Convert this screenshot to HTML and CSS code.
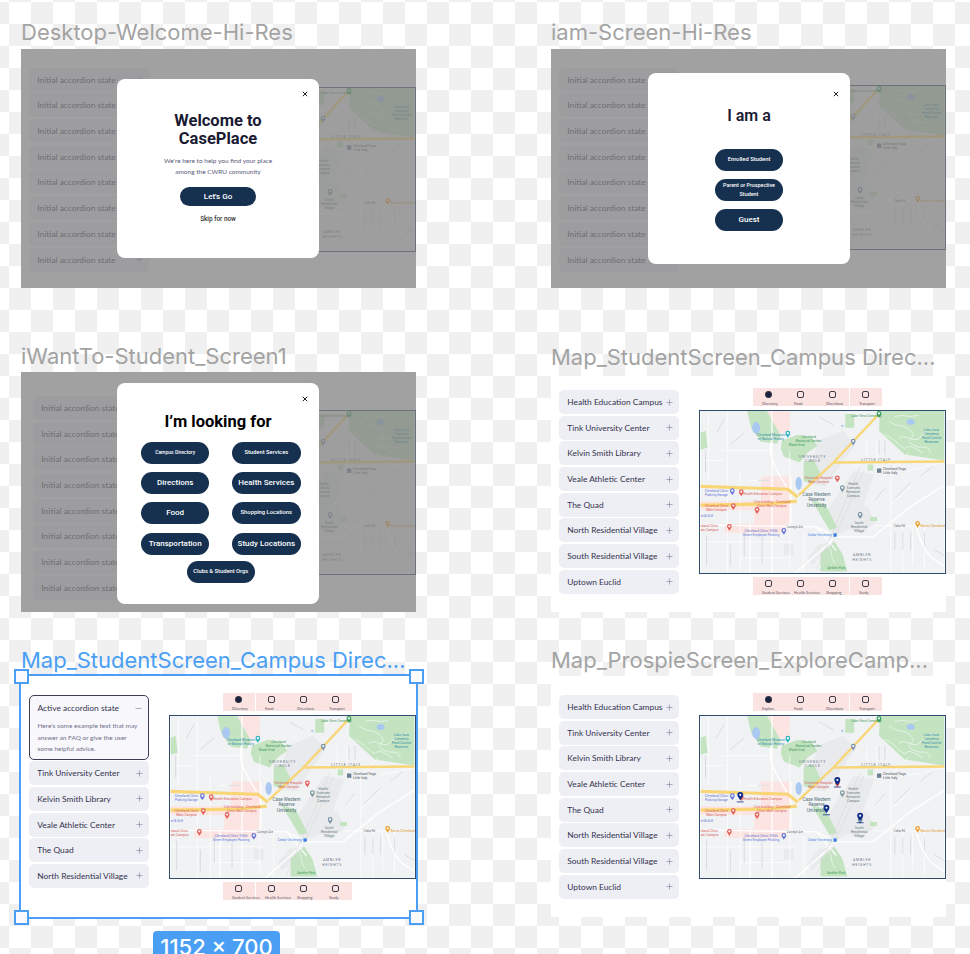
FILE: index.html
```html
<!DOCTYPE html>
<html lang="en">
    <head>
        <meta charset="UTF-8">
        <title>CasePlace screens</title>
        <link rel="stylesheet" href="styles.css">
    </head>

    <body>
        <!-- shared shapes -->
        <svg class="defs" width="0" height="0">
            <symbol id="plus" viewBox="0 0 7 7"><path d="M3.5 .5v6M.5 3.5h6"/></symbol>
            <symbol id="minus" viewBox="0 0 7 7"><path d="M.5 3.5h6"/></symbol>
            <symbol id="close" viewBox="0 0 6 6"><path d="M.8 .8l4.400 4.400M5.200 .8L.8 5.200"/></symbol>
            <g id="pin">
                <path d="M0 0c-.5-1.3-2.4-2.7-2.4-4.6a2.4 2.4 0 0 1 4.8 0C2.4-2.7.5-1.3 0 0z"/>
                <circle cy="-4.6" r="1.1" fill="#fff"/>
            </g>
            <g id="bigpin">
                <path d="M0 0c-.6-1.6-3-3.2-3-5.4a3 3 0 0 1 6 0C3-3.200.6-1.600 0 0z" fill="#0d2a86"/>
                <circle cy="-5.400" r="1.100" fill="#fff"/>
                <path d="M-3.500 1.700h7" stroke="#0d2a86" stroke-width=".8"/>
            </g>
        </svg>

        <main class="canvas">

            <section class="board board-welcome">
                <h2 class="board-name">Desktop-Welcome-Hi-Res</h2>
                <div class="screen screen-dim">
                    <div class="accordion">
                        <div class="acc-item">Initial accordion state<svg class="acc-icon"><use href="#plus"/></svg></div>
                        <div class="acc-item">Initial accordion state<svg class="acc-icon"><use href="#plus"/></svg></div>
                        <div class="acc-item">Initial accordion state<svg class="acc-icon"><use href="#plus"/></svg></div>
                        <div class="acc-item">Initial accordion state<svg class="acc-icon"><use href="#plus"/></svg></div>
                        <div class="acc-item">Initial accordion state<svg class="acc-icon"><use href="#plus"/></svg></div>
                        <div class="acc-item">Initial accordion state<svg class="acc-icon"><use href="#plus"/></svg></div>
                        <div class="acc-item">Initial accordion state<svg class="acc-icon"><use href="#plus"/></svg></div>
                        <div class="acc-item">Initial accordion state<svg class="acc-icon"><use href="#plus"/></svg></div>
                    </div>
                    <div class="map-col">
                        <div class="map"><svg class="map-svg" viewBox="0 0 246 164"><use href="#campusMap"/></svg></div>
                    </div>
                    <div class="scrim"></div>
                    <div class="modal">
                        <svg class="modal-close"><use href="#close"/></svg>
                        <h1 class="modal-title">Welcome to<br>CasePlace</h1>
                        <p class="modal-text">We're here to help you find your place<br>among the CWRU community</p>
                        <button class="pill pill-go">Let's Go</button>
                        <div class="skip">Skip for now</div>
                    </div>
                </div>
            </section>

            <section class="board board-iam">
                <h2 class="board-name">iam-Screen-Hi-Res</h2>
                <div class="screen screen-dim">
                    <div class="accordion">
                        <div class="acc-item">Initial accordion state<svg class="acc-icon"><use href="#plus"/></svg></div>
                        <div class="acc-item">Initial accordion state<svg class="acc-icon"><use href="#plus"/></svg></div>
                        <div class="acc-item">Initial accordion state<svg class="acc-icon"><use href="#plus"/></svg></div>
                        <div class="acc-item">Initial accordion state<svg class="acc-icon"><use href="#plus"/></svg></div>
                        <div class="acc-item">Initial accordion state<svg class="acc-icon"><use href="#plus"/></svg></div>
                        <div class="acc-item">Initial accordion state<svg class="acc-icon"><use href="#plus"/></svg></div>
                        <div class="acc-item">Initial accordion state<svg class="acc-icon"><use href="#plus"/></svg></div>
                        <div class="acc-item">Initial accordion state<svg class="acc-icon"><use href="#plus"/></svg></div>
                    </div>
                    <div class="map-col">
                        <div class="map"><svg class="map-svg" viewBox="0 0 246 164"><use href="#campusMap"/></svg></div>
                    </div>
                    <div class="scrim"></div>
                    <div class="modal">
                        <svg class="modal-close"><use href="#close"/></svg>
                        <h1 class="modal-title">I am a</h1>
                        <div class="pill-stack">
                            <button class="pill pill-sm">Enrolled Student</button>
                            <button class="pill pill-xs">Parent or Prospective Student</button>
                            <button class="pill">Guest</button>
                        </div>
                    </div>
                </div>
            </section>

            <section class="board board-want">
                <h2 class="board-name">iWantTo-Student_Screen1</h2>
                <div class="screen screen-dim">
                    <div class="accordion">
                        <div class="acc-item">Initial accordion state<svg class="acc-icon"><use href="#plus"/></svg></div>
                        <div class="acc-item">Initial accordion state<svg class="acc-icon"><use href="#plus"/></svg></div>
                        <div class="acc-item">Initial accordion state<svg class="acc-icon"><use href="#plus"/></svg></div>
                        <div class="acc-item">Initial accordion state<svg class="acc-icon"><use href="#plus"/></svg></div>
                        <div class="acc-item">Initial accordion state<svg class="acc-icon"><use href="#plus"/></svg></div>
                        <div class="acc-item">Initial accordion state<svg class="acc-icon"><use href="#plus"/></svg></div>
                        <div class="acc-item">Initial accordion state<svg class="acc-icon"><use href="#plus"/></svg></div>
                        <div class="acc-item">Initial accordion state<svg class="acc-icon"><use href="#plus"/></svg></div>
                    </div>
                    <div class="map-col">
                        <div class="map"><svg class="map-svg" viewBox="0 0 246 164"><use href="#campusMap"/></svg></div>
                    </div>
                    <div class="scrim"></div>
                    <div class="modal">
                        <svg class="modal-close"><use href="#close"/></svg>
                        <h1 class="modal-title">I’m looking for</h1>
                        <div class="pill-grid">
                            <button class="pill pill-xxs">Campus Directory</button>
                            <button class="pill pill-sm">Student Services</button>
                            <button class="pill">Directions</button>
                            <button class="pill">Health Services</button>
                            <button class="pill">Food</button>
                            <button class="pill pill-sm">Shopping Locations</button>
                            <button class="pill">Transportation</button>
                            <button class="pill">Study Locations</button>
                            <button class="pill pill-sm pill-wide">Clubs &amp; Student Orgs</button>
                        </div>
                    </div>
                </div>
            </section>

            <section class="board board-directory">
                <h2 class="board-name">Map_StudentScreen_Campus Direc...</h2>
                <div class="screen">
                    <div class="accordion">
                        <div class="acc-item">Health Education Campus<svg class="acc-icon"><use href="#plus"/></svg></div>
                        <div class="acc-item">Tink University Center<svg class="acc-icon"><use href="#plus"/></svg></div>
                        <div class="acc-item">Kelvin Smith Library<svg class="acc-icon"><use href="#plus"/></svg></div>
                        <div class="acc-item">Veale Athletic Center<svg class="acc-icon"><use href="#plus"/></svg></div>
                        <div class="acc-item">The Quad<svg class="acc-icon"><use href="#plus"/></svg></div>
                        <div class="acc-item">North Residential Village<svg class="acc-icon"><use href="#plus"/></svg></div>
                        <div class="acc-item">South Residential Village<svg class="acc-icon"><use href="#plus"/></svg></div>
                        <div class="acc-item">Uptown Euclid<svg class="acc-icon"><use href="#plus"/></svg></div>
                    </div>
                    <div class="map-col">
                        <div class="tabs tabs-split3">
                            <div class="tab tab-on"><i class="tab-icon"></i>Directory</div>
                            <div class="tab"><i class="tab-icon"></i>Food</div>
                            <div class="tab"><i class="tab-icon"></i>Directions</div>
                            <div class="tab"><i class="tab-icon"></i>Transport</div>
                        </div>
                        <div class="map">
                            <!-- the other boards reuse this map with <use> -->
                            <svg class="map-svg" viewBox="0 0 246 164">
                                <g id="campusMap">
                                    <rect width="246" height="164" fill="#f1f2f4"/>

                                    <!-- pink hospital blocks -->
                                    <path class="m-pink" d="M68 0h22v22H76zM61 66h30v48H54v-14H0V91h61z"/>
                                    <path class="m-pink" d="M24 114h62v9H24z"/>

                                    <!-- grey campus blocks -->
                                    <path class="m-block" d="M118 30l26-10 12 14-30 42-18-2zM123 108l32-48 20 4-4 12-14 40-22 10z"/>
                                    <path class="m-block" d="M152 100l16-4 8 16-14 12-14-6zM108 148l12-14 16-2-24 24z"/>
                                    <rect class="m-block" x="84" y="134" width="10" height="11"/>

                                    <!-- parks -->
                                    <path class="m-park" d="M47 0h20l14 25-4 8-16-2-10-14z"/>
                                    <path class="m-park" d="M82 30l16-6 14 3 6 8-10 7-8 10-16-6-3-8z"/>
                                    <path class="m-park" d="M181 0h65v50l-40-6-26-24z"/>
                                    <path class="m-park" d="M146 3h9v14h-9zM0 22l5-2 2 17-7 2zM104 52l10-3 7 14-8 10-9-2z"/>
                                    <path class="m-park" d="M112 90l14 4 12 24-8 2zM121 144l14-12 8 12 5 18h-27z"/>
                                    <rect class="m-park" x="171" y="107" width="7" height="4"/>
                                    <rect class="m-park" x="168" y="54" width="6" height="6"/>
                                    <path class="m-trail" d="M190 10c10 8 14 2 22 10s-8 8 2 14 14-2 18 8M200 28c6-6 14 4 20 0s8-12 18-10M186 24c8 2 12 10 20 14M196 6c8-4 14 2 24-2M206 38c6-6 12 2 18 4"/>
                                    <path class="m-trail" d="M128 136c6 4 2 12 8 18"/>

                                    <!-- water -->
                                    <ellipse class="m-water" cx="56" cy="17" rx="4" ry="6"/>
                                    <ellipse class="m-water" cx="99" cy="73" rx="3.200" ry="6.500"/>
                                    <ellipse class="m-water" cx="212" cy="11" rx="4" ry="3"/>
                                    <circle class="m-water" cx="143" cy="15" r="1.200"/>

                                    <!-- side streets -->
                                    <path class="m-street" d="M27 0v164M40 60v104M8 0v70M20 40H72M4 50h20M48 70h24M90 40v120M104 120v44M0 132h96M40 148h50M168 30v30M178 30v28M192 60v104M204 116v48M214 116v40M226 116v44M180 70l30-28M186 100l26-24M210 60l36-8M175 116h50"/>
                                    <path class="m-minor" d="M16 22l8-14M30 34l14-12M5 40v22M120 6l14 8M58 70h12M44 122v26M62 128v26M6 126v30M30 135v22M180 30v14M186 30v14M196 122v18M204 122v18M212 122v18M226 122v18M196 88l16-16M176 90l10-12M222 66l12-10M236 140l10 6"/>
                                    <path class="m-road" d="M72 0v164M73 27c-8 14 2 30 14 50M0 115l117 2 20 10h37l37-30 35-22M217 114c4 16 8 26 16 34l13 9M137 127l-42 37M117 117l20 24M91 66v48M50 114v50"/>
                                    <path class="m-rail" d="M161 57l-44 103M165 60l-44 100"/>

                                    <!-- highways -->
                                    <path class="m-hwy" d="M179 4L134 52 99 85"/>
                                    <path class="m-hwy" d="M135 52l111-1"/>
                                    <path class="m-hwy-wide" d="M0 76l88 3 10 8M0 95l68-1 29-3"/>

                                    <!-- pins -->
                                    <use href="#pin" x="180" y="7" fill="#36a15a"/>
                                    <use href="#pin" x="88" y="27" fill="#2eb3bf"/>
                                    <use href="#pin" x="154" y="35" fill="#7c92a8"/>
                                    <use href="#pin" x="138" y="72" fill="#e0605a"/>
                                    <use href="#pin" x="143" y="82" fill="#7c98a0"/>
                                    <use href="#pin" x="32" y="85" fill="#6b78d8"/>
                                    <use href="#pin" x="41" y="86" fill="#e0605a"/>
                                    <use href="#pin" x="33" y="100" fill="#e0605a"/>
                                    <use href="#pin" x="57" y="104" fill="#e0605a"/>
                                    <use href="#pin" x="29" y="121" fill="#e0605a"/>
                                    <use href="#pin" x="84" y="125" fill="#6b78d8"/>
                                    <use href="#pin" x="161" y="109" fill="#7c92a8"/>
                                    <use href="#pin" x="219" y="118" fill="#eb9d2c"/>
                                    <rect x="178" y="58" width="4.400" height="4.400" fill="#6e8296"/>
                                    <rect x="134" y="123.500" width="3.400" height="3.400" fill="#3f7fe0"/>

                                    <!-- labels -->
                                    <text class="m-txt m-green" x="152" y="6">Lake View Cemetery</text>
                                    <text class="m-txt m-teal m-mid" x="233"><tspan x="233" y="20">Lake View</tspan><tspan x="233" y="24">Cemetery</tspan><tspan x="233" y="28">Pond Control</tspan><tspan x="233" y="32">Reservoir</tspan></text>
                                    <text class="m-txt m-teal m-mid" x="71"><tspan x="71" y="25">Cleveland Museum</tspan><tspan x="71" y="29">of Natural History</tspan></text>
                                    <text class="m-txt m-green m-mid" x="109"><tspan x="109" y="27">Cleveland</tspan><tspan x="109" y="31">Botanical Garden</tspan><tspan x="97" y="35.500">Wade Oval</tspan></text>
                                    <text class="m-area m-mid" x="113"><tspan x="113" y="47">UNIVERSITY</tspan><tspan x="113" y="51.500">CIRCLE</tspan></text>
                                    <text class="m-area m-mid" x="177" y="50.500">LITTLE ITALY</text>
                                    <text class="m-txt m-dark" x="184"><tspan x="184" y="60">Cleveland Yoga</tspan><tspan x="184" y="64">Little Italy</tspan></text>
                                    <text class="m-txt m-red m-mid" x="119"><tspan x="119" y="69">University Hospital</tspan><tspan x="119" y="73">Main Campus</tspan></text>
                                    <text class="m-txt m-slate m-mid" x="154"><tspan x="154" y="75">Health</tspan><tspan x="154" y="79">Sciences</tspan><tspan x="154" y="83">Research</tspan><tspan x="154" y="87">Campus</tspan></text>
                                    <text class="m-case m-mid" x="117"><tspan x="117" y="85.500">Case Western</tspan><tspan x="117" y="91">Reserve</tspan><tspan x="117" y="96.500">University</tspan></text>
                                    <text class="m-txt m-blue m-mid" x="16"><tspan x="16" y="82">Cleveland Clinic</tspan><tspan x="16" y="86">Parking Garage</tspan></text>
                                    <text class="m-txt m-red" x="43" y="85">Health Education Campus</text>
                                    <text class="m-txt m-red m-mid" x="16"><tspan x="16" y="97">Cleveland Clinic</tspan><tspan x="16" y="101">Main Campus</tspan></text>
                                    <text class="m-txt m-red m-mid" x="72"><tspan x="72" y="93">Crile building - Cleveland</tspan><tspan x="72" y="97">Clinic Main Campus</tspan></text>
                                    <text class="m-txt m-blue" x="0" y="107">et &amp; Grill</text>
                                    <text class="m-txt m-red" x="0"><tspan x="0" y="117">eland Clinic</tspan><tspan x="0" y="121">ain Campus</tspan></text>
                                    <text class="m-txt m-blue m-mid" x="61"><tspan x="61" y="122">Cleveland Clinic 100th</tspan><tspan x="61" y="126">Street Employee Parking</tspan></text>
                                    <text class="m-txt m-road-name" x="87" y="118">Carnegie Ave</text>
                                    <text class="m-txt m-road-name" x="195" y="117">Cedar Rd</text>
                                    <text class="m-txt m-cedar" x="108" y="126.500">Cedar-University</text>
                                    <text class="m-txt m-slate m-mid" x="160"><tspan x="160" y="114">South</tspan><tspan x="160" y="118">Residential</tspan><tspan x="160" y="122">Village</tspan></text>
                                    <text class="m-txt m-orange" x="222" y="117">Barrio Cleveland</text>
                                    <text class="m-area m-mid" x="163"><tspan x="163" y="146">AMBLER</tspan><tspan x="163" y="151">HEIGHTS</tspan></text>
                                    <text class="m-txt m-green m-mid" x="137" y="159.500">Ambler Park</text>
                                </g>
                            </svg>
                        </div>
                        <div class="tabs tabs-split3">
                            <div class="tab"><i class="tab-icon"></i>Student Services</div>
                            <div class="tab"><i class="tab-icon"></i>Health Services</div>
                            <div class="tab"><i class="tab-icon"></i>Shopping</div>
                            <div class="tab"><i class="tab-icon"></i>Study</div>
                        </div>
                    </div>
                </div>
            </section>

            <section class="board board-active">
                <h2 class="board-name">Map_StudentScreen_Campus Direc...</h2>
                <div class="screen">
                    <div class="accordion">
                        <div class="acc-item acc-open">
                            <div class="acc-head">Active accordion state<svg class="acc-icon"><use href="#minus"/></svg></div>
                            <p class="acc-body">Here's some example text that may<br>answer an FAQ or give the user<br>some helpful advice.</p>
                        </div>
                        <div class="acc-item">Tink University Center<svg class="acc-icon"><use href="#plus"/></svg></div>
                        <div class="acc-item">Kelvin Smith Library<svg class="acc-icon"><use href="#plus"/></svg></div>
                        <div class="acc-item">Veale Athletic Center<svg class="acc-icon"><use href="#plus"/></svg></div>
                        <div class="acc-item">The Quad<svg class="acc-icon"><use href="#plus"/></svg></div>
                        <div class="acc-item">North Residential Village<svg class="acc-icon"><use href="#plus"/></svg></div>
                    </div>
                    <div class="map-col">
                        <div class="tabs tabs-split1">
                            <div class="tab tab-on"><i class="tab-icon"></i>Directory</div>
                            <div class="tab"><i class="tab-icon"></i>Food</div>
                            <div class="tab"><i class="tab-icon"></i>Directions</div>
                            <div class="tab"><i class="tab-icon"></i>Transport</div>
                        </div>
                        <div class="map"><svg class="map-svg" viewBox="0 0 246 164"><use href="#campusMap"/></svg></div>
                        <div class="tabs tabs-split1">
                            <div class="tab"><i class="tab-icon"></i>Student Services</div>
                            <div class="tab"><i class="tab-icon"></i>Health Services</div>
                            <div class="tab"><i class="tab-icon"></i>Shopping</div>
                            <div class="tab"><i class="tab-icon"></i>Study</div>
                        </div>
                    </div>
                </div>
                <i class="handle handle-tl"></i>
                <i class="handle handle-tr"></i>
                <i class="handle handle-bl"></i>
                <i class="handle handle-br"></i>
                <div class="size-badge">1152 × 700</div>
            </section>

            <section class="board board-explore">
                <h2 class="board-name">Map_ProspieScreen_ExploreCamp...</h2>
                <div class="screen">
                    <div class="accordion">
                        <div class="acc-item">Health Education Campus<svg class="acc-icon"><use href="#plus"/></svg></div>
                        <div class="acc-item">Tink University Center<svg class="acc-icon"><use href="#plus"/></svg></div>
                        <div class="acc-item">Kelvin Smith Library<svg class="acc-icon"><use href="#plus"/></svg></div>
                        <div class="acc-item">Veale Athletic Center<svg class="acc-icon"><use href="#plus"/></svg></div>
                        <div class="acc-item">The Quad<svg class="acc-icon"><use href="#plus"/></svg></div>
                        <div class="acc-item">North Residential Village<svg class="acc-icon"><use href="#plus"/></svg></div>
                        <div class="acc-item">South Residential Village<svg class="acc-icon"><use href="#plus"/></svg></div>
                        <div class="acc-item">Uptown Euclid<svg class="acc-icon"><use href="#plus"/></svg></div>
                    </div>
                    <div class="map-col">
                        <div class="tabs tabs-split3">
                            <div class="tab tab-on"><i class="tab-icon"></i>Explore</div>
                            <div class="tab"><i class="tab-icon"></i>Food</div>
                            <div class="tab"><i class="tab-icon"></i>Directions</div>
                            <div class="tab"><i class="tab-icon"></i>Transport</div>
                        </div>
                        <div class="map">
                            <svg class="map-svg" viewBox="0 0 246 164">
                                <use href="#campusMap"/>
                                <use href="#bigpin" x="138" y="70"/>
                                <use href="#bigpin" x="40" y="85"/>
                                <use href="#bigpin" x="127" y="98"/>
                                <use href="#bigpin" x="161" y="106"/>
                            </svg>
                        </div>
                    </div>
                </div>
            </section>

        </main>
    </body>
</html>
```

FILE: styles.css
```css
html, body {
    margin: 0;
    height: 100%;
    overflow: hidden;
}

body {
    font-family: "Lato", "Liberation Sans", sans-serif;
    color: #34344e;
}

.defs {
    position: absolute;
}

.canvas {
    position: relative;
    width: 970px;
    height: 954px;
    overflow: hidden;
    background: conic-gradient(#f0f0f0 25%, #fff 0 50%, #f0f0f0 0 75%, #fff 0) 9px 2px / 44px 44px;
}

/* artboards sit freely on the canvas */
.board {
    position: absolute;
    width: 395px;
}

.board-welcome { left: 21px; top: 19px; }
.board-iam { left: 551px; top: 19px; }
.board-want { left: 21px; top: 343px; }
.board-directory { left: 551px; top: 344px; }
.board-active { left: 21px; top: 647px; }
.board-explore { left: 551px; top: 647px; }

.board-name {
    margin: 0 0 3px;
    height: 26px;
    font: 400 22px/26px "Inter", sans-serif;
    color: #a3a3a3;
    white-space: nowrap;
}

.board-welcome .board-name, .board-iam .board-name { margin-bottom: 4px; }
.board-directory .board-name { margin-bottom: 6px; }

.board-active .board-name {
    color: #4a9ff5;
}

.screen {
    position: relative;
    display: flex;
    gap: 20px;
    padding-left: 8px;
    height: 240px;
    box-sizing: border-box;
    background: #fff;
    overflow: hidden;
}

.board-welcome .screen, .board-iam .screen { height: 239px; }
.board-directory .screen { height: 236px; }
.board-active .screen, .board-explore .screen { height: 241px; }

.board-want .screen { padding-left: 12px; gap: 16px; }

.board-welcome .accordion, .board-iam .accordion { margin-top: 18.7px; }
.board-want .accordion { margin-top: 24px; }
.board-directory .accordion { margin-top: 14px; }
.board-active .accordion, .board-explore .accordion { margin-top: 19px; }

.board-welcome .map-col { margin-top: 38px; }
.board-iam .map-col { margin-top: 36px; }
.board-want .map-col { margin-top: 38px; }
.board-directory .map-col { margin-top: 12px; }
.board-active .map-col, .board-explore .map-col { margin-top: 17px; }

/* accordion */
.accordion {
    display: flex;
    flex-direction: column;
    gap: 1.7px;
    width: 120px;
    flex: none;
}

.acc-item {
    display: flex;
    align-items: center;
    justify-content: space-between;
    height: 24px;
    flex: none;
    padding: 0 6.500px 0 8.300px;
    box-sizing: border-box;
    border-radius: 5px;
    background: #eeeef5;
    font-size: 8.400px;
    white-space: nowrap;
}

.acc-icon {
    width: 7px;
    height: 7px;
    flex: none;
    fill: none;
    stroke: #8c8ca3;
    stroke-width: .7;
}

.acc-open {
    display: block;
    height: 64.500px;
    padding: 0 6.500px 0 7.500px;
    background: #f8f8fc;
    border: .8px solid #3c3c55;
}

.acc-head {
    display: flex;
    align-items: center;
    justify-content: space-between;
    height: 24px;
}

.acc-body {
    margin: 0;
    font-size: 6.500px;
    line-height: 11.500px;
    color: #70708a;
    white-space: nowrap;
}

/* map column */
.map-col {
    display: flex;
    flex-direction: column;
    width: 247px;
    flex: none;
}

.map {
    box-sizing: border-box;
    width: 247px;
    height: 164.500px;
    margin: 3.500px 0 3px;
    border: 1.500px solid #2f4b6e;
    flex: none;
}

.board-welcome .map, .board-iam .map, .board-want .map {
    margin-top: 0;
}

.map-svg {
    display: block;
    width: 100%;
    height: 100%;
}

.tabs {
    display: flex;
    width: 129px;
    height: 18px;
    margin-left: 54px;
    flex: none;
    background: #fae3e1;
}

.tab {
    display: flex;
    flex-direction: column;
    align-items: flex-start;
    flex: 1 0 0;
    min-width: 0;
    padding: 3px 0 0 9px;
    box-sizing: border-box;
    font-size: 3.800px;
    line-height: 5px;
    color: #5a5a68;
    white-space: nowrap;
}

.tabs-split1 .tab:nth-child(1), .tabs-split3 .tab:nth-child(3) {
    border-right: 1px solid #fff;
}

.tab-icon {
    display: block;
    flex: none;
    width: 7px;
    height: 7px;
    margin: 0 0 2.500px 2.500px;
    box-sizing: border-box;
    border: .8px solid #3a3a4a;
    border-radius: 2px;
}

.tab-on .tab-icon {
    background: #1a2240;
    border-radius: 3px;
}

/* dimmed screens with a dialog on top */
.scrim {
    position: absolute;
    inset: 0;
    background: rgba(128, 128, 128, .74);
}

.modal {
    position: absolute;
    width: 202px;
    display: flex;
    flex-direction: column;
    align-items: center;
    box-sizing: border-box;
    background: #fff;
    border-radius: 8px;
    color: #1a1a33;
}

.board-welcome .modal { left: 96px; top: 30px; height: 179px; padding-top: 33px; }
.board-iam .modal { left: 97px; top: 24px; height: 191px; padding-top: 33px; }
.board-want .modal { left: 96px; top: 11px; height: 221px; padding-top: 28.700px; }

.modal-close {
    position: absolute;
    right: 11.500px;
    top: 12px;
    width: 6px;
    height: 6px;
    fill: none;
    stroke: #222;
    stroke-width: 1;
}

.board-iam .modal-close { top: 18px; }
.board-want .modal-close { top: 13px; }

.modal-title {
    margin: 0;
    font-family: "Roboto", sans-serif;
    font-size: 16.500px;
    line-height: 17.500px;
    font-weight: 700;
    text-align: center;
}

.board-iam .modal-title, .board-want .modal-title {
    line-height: 20px;
}

.board-iam .modal-title { font-size: 16px; font-weight: 600; }
.board-want .modal-title { color: #000; font-size: 16.500px; }

.modal-text {
    margin: 7.700px 0 0;
    font-size: 6.500px;
    line-height: 11.500px;
    color: #5a5a78;
    text-align: center;
}

.pill {
    display: block;
    width: 68.500px;
    height: 22px;
    padding: 0 4px;
    border: 0;
    border-radius: 11px;
    background: #16304f;
    color: #fff;
    font: 500 8px/1 "Roboto", sans-serif;
}

.pill-sm { font-size: 5.800px; }
.pill-xs { font-size: 5.400px; line-height: 9.500px; padding: 0 2px; }
.pill-xxs { font-size: 5px; }

.pill-go {
    width: 75.500px;
    height: 19.300px;
    margin-top: 9.500px;
    font-size: 8px;
}

.skip {
    margin-top: 8.700px;
    font-family: "Roboto", sans-serif;
    font-size: 6.400px;
    line-height: 8px;
    font-weight: 500;
    color: #333;
}

.pill-stack {
    display: flex;
    flex-direction: column;
    gap: 8px;
    margin-top: 23px;
}

.pill-grid {
    display: grid;
    grid-template-columns: 68.500px 68.500px;
    column-gap: 22.700px;
    row-gap: 8.200px;
    margin: 10.300px 0 0 5.500px;
}

.pill-wide {
    grid-column: 1 / 3;
    justify-self: center;
    margin-top: -1.500px;
}

/* selection chrome around the active board */
.board-active .screen {
    outline: 2px solid #4a9ff5;
    outline-offset: -.5px;
}

.handle {
    position: absolute;
    width: 15px;
    height: 15px;
    box-sizing: border-box;
    border: 2px solid #4a9ff5;
    background: #fbfbfd;
}

.handle-tl { left: -7.500px; top: 21.500px; }
.handle-tr { right: -7.500px; top: 21.500px; }
.handle-bl { left: -7.500px; bottom: -7.500px; }
.handle-br { right: -7.500px; bottom: -7.500px; }

.size-badge {
    position: absolute;
    left: 132px;
    top: 284px;
    width: 127px;
    height: 32px;
    border-radius: 4px;
    background: #4a9ff5;
    color: #fff;
    font: 500 22px/32px "Inter", sans-serif;
    text-align: center;
    white-space: nowrap;
}

/* map artwork */
.m-pink { fill: #fbe4e1; }
.m-block { fill: #e9eaec; }
.m-park { fill: #c3e3c1; }
.m-trail { fill: none; stroke: #eff7ee; stroke-width: .8; }
.m-water { fill: #a9c8f2; }
.m-street { fill: none; stroke: #fff; stroke-width: .7; }
.m-minor { fill: none; stroke: #c9ccd1; stroke-width: .6; }
.m-road { fill: none; stroke: #fff; stroke-width: 1.300; }
.m-rail { fill: none; stroke: #d4d6d9; stroke-width: .5; }
.m-hwy { fill: none; stroke: #f9d675; stroke-width: 2.400; }
.m-hwy-wide { fill: none; stroke: #f9d675; stroke-width: 3.200; }

.m-txt { font-family: "Roboto", sans-serif; font-size: 3.400px; }
.m-mid { text-anchor: middle; }
.m-area { font-family: "Roboto", sans-serif; font-size: 3.500px; letter-spacing: .8px; fill: #66758a; }
.m-case { font-family: "Roboto", sans-serif; font-size: 4.600px; fill: #4f6f74; }
.m-green { fill: #3f9a5a; }
.m-teal { fill: #2f8fae; }
.m-red { fill: #d9605a; }
.m-blue { fill: #6272d4; }
.m-cedar { fill: #3f7fe0; }
.m-orange { fill: #e39a2d; }
.m-dark { fill: #4a5560; }
.m-slate { fill: #667a80; }
.m-road-name { fill: #6c7074; font-size: 2.800px; }
```
